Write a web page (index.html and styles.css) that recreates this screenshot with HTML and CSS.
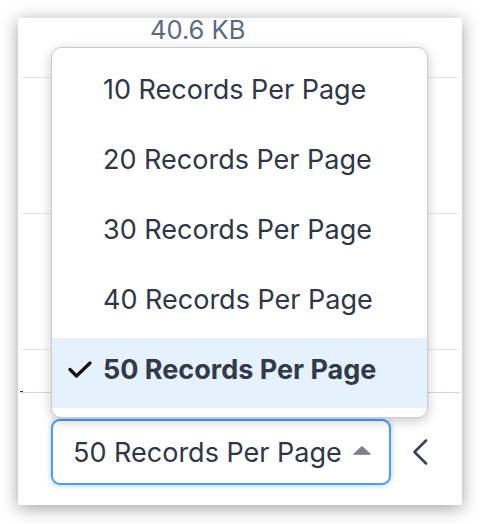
FILE: index.html
```html
<!DOCTYPE html>
<html>
<head>
<meta charset="utf-8">
<link rel="stylesheet" href="styles.css">
</head>
<body>
<div class="panel">
  <div class="row row-first"><span class="size">40.6 KB</span></div>
  <div class="row row-mid"></div>
  <div class="row row-mid"></div>
  <div class="row row-last"><span class="tick"></span></div>
  <div class="footer">
    <button class="select">
      <span class="select-label">50 Records Per Page</span>
      <svg class="caret" width="18" height="9" viewBox="0 0 18 9"><path d="M9 0.8 L17.2 8.2 L0.8 8.2 Z" fill="#7c808a" stroke="#7c808a" stroke-width="1.2" stroke-linejoin="round"/></svg>
    </button>
    <svg class="chev" width="16" height="26" viewBox="0 0 16 26"><path d="M14 1.5 L2.5 13 L14 24.5" fill="none" stroke="#3b4252" stroke-width="2.6" stroke-linecap="round" stroke-linejoin="round"/></svg>
  </div>
  <ul class="menu">
    <li class="item">10 Records Per Page</li>
    <li class="item">20 Records Per Page</li>
    <li class="item">30 Records Per Page</li>
    <li class="item">40 Records Per Page</li>
    <li class="item item-selected"><svg class="check" width="24" height="17" viewBox="0 0 24 17"><path d="M2 8.5 L8.5 15 L22 2" fill="none" stroke="#111" stroke-width="3.2" stroke-linecap="round" stroke-linejoin="round"/></svg>50 Records Per Page</li>
  </ul>
</div>
</body>
</html>
```
FILE: styles.css
```css
* { box-sizing: border-box; }
html, body { margin: 0; padding: 0; background: #ffffff; }
body {
  padding: 18px;
  font-family: Inter, "Noto Sans", sans-serif;
}
.panel {
  position: relative;
  width: 444px;
  height: 487px;
  background: #fff;
  padding: 0 2px;
  box-shadow: 0 3px 16px rgba(0, 0, 0, 0.38);
  overflow: hidden;
}
.row {
  border-bottom: 1px solid #e6e8ef;
  position: relative;
}
.row-first {
  height: 60px;
  padding-left: 130px;
}
.size {
  display: block;
  font-size: 25.5px;
  line-height: 24px;
  color: #5a6984;
}
.row-mid { height: 136px; }
.row-last {
  height: 43px;
  border-bottom: 1px solid #cfd8e3;
}
.tick {
  position: absolute;
  left: 0;
  bottom: 0;
  width: 3px;
  height: 1px;
  background: #333;
}
.footer {
  display: flex;
  align-items: center;
  gap: 21px;
  padding: 26px 0 0 31px;
}
.select {
  width: 340px;
  height: 66px;
  border: 2px solid #4c9bf6;
  border-radius: 9px;
  background: #fff;
  box-shadow: 0 0 5px 1px rgba(70, 150, 245, 0.35);
  display: flex;
  align-items: center;
  justify-content: space-between;
  padding: 0 18px 0 20px;
  font-family: inherit;
  cursor: pointer;
}
.select-label {
  font-size: 27px;
  color: #2f3645;
  line-height: 1;
}
.caret { display: block; margin-bottom: 4px; }
.chev { display: block; }
.menu {
  position: absolute;
  left: 33px;
  top: 29px;
  width: 377px;
  height: 371px;
  margin: 0;
  padding: 10px 0 9px;
  list-style: none;
  background: #fff;
  border: 1px solid #c9cacd;
  border-radius: 10px;
  box-shadow: 0 3px 12px rgba(0, 0, 0, 0.22);
}
.item {
  position: relative;
  height: 70px;
  line-height: 64px;
  padding-left: 51px;
  font-size: 27px;
  color: #2f3645;
}
.item-selected {
  background: #e5f1fd;
  font-weight: 700;
  color: #323a49;
}
.check {
  position: absolute;
  left: 16px;
  top: 23px;
}
```
